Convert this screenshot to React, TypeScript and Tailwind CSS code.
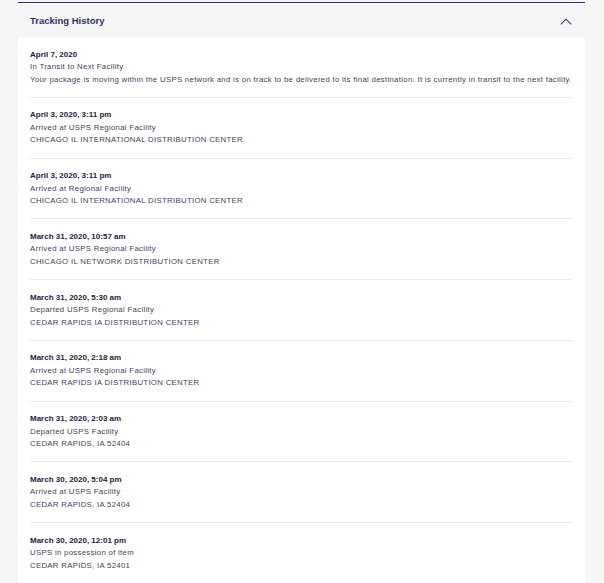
import React from "react";

const events = [
  {
    date: "April 7, 2020",
    status: "In Transit to Next Facility",
    detail:
      "Your package is moving within the USPS network and is on track to be delivered to its final destination. It is currently in transit to the next facility.",
  },
  { date: "April 3, 2020, 3:11 pm", status: "Arrived at USPS Regional Facility", detail: "CHICAGO IL INTERNATIONAL DISTRIBUTION CENTER" },
  { date: "April 3, 2020, 3:11 pm", status: "Arrived at Regional Facility", detail: "CHICAGO IL INTERNATIONAL DISTRIBUTION CENTER" },
  { date: "March 31, 2020, 10:57 am", status: "Arrived at USPS Regional Facility", detail: "CHICAGO IL NETWORK DISTRIBUTION CENTER" },
  { date: "March 31, 2020, 5:30 am", status: "Departed USPS Regional Facility", detail: "CEDAR RAPIDS IA DISTRIBUTION CENTER" },
  { date: "March 31, 2020, 2:18 am", status: "Arrived at USPS Regional Facility", detail: "CEDAR RAPIDS IA DISTRIBUTION CENTER" },
  { date: "March 31, 2020, 2:03 am", status: "Departed USPS Facility", detail: "CEDAR RAPIDS, IA 52404" },
  { date: "March 30, 2020, 5:04 pm", status: "Arrived at USPS Facility", detail: "CEDAR RAPIDS, IA 52404" },
  { date: "March 30, 2020, 12:01 pm", status: "USPS in possession of item", detail: "CEDAR RAPIDS, IA 52401" },
];

export default function App() {
  return (
    <div
      className="w-[604px] h-[583px] overflow-hidden bg-[#f6f6f6]"
      style={{ fontFamily: '"Liberation Sans", Arial, sans-serif' }}
    >
      <div className="ml-[18px] w-[567px] mt-[2px] border-t border-[#333366]">
        <div className="h-[34px] flex items-center justify-between pl-[12px] pr-[13px] pt-[2px] bg-[#f5f5f5]">
          <span className="text-[9.5px] font-bold text-[#333366] leading-none">Tracking History</span>
          <svg width="12" height="7" viewBox="0 0 12 7" fill="none">
            <path d="M0.8 6.4 L6 1.2 L11.2 6.4" stroke="#333366" strokeWidth="1.1" />
          </svg>
        </div>
        <div className="bg-white px-[12px]">
          {events.map((e, i) => (
            <div key={i} className="pt-[11.5px] pb-[10.75px] border-b border-[#ececec] leading-[12.5px]">
              <div className="text-[8px] font-bold text-[#23233f]">{e.date}</div>
              <div className="text-[7.8px] tracking-[0.3px] text-[#3f3f5e]">{e.status}</div>
              <div className="text-[7.8px] tracking-[0.3px] text-[#3f3f5e] whitespace-nowrap">{e.detail}</div>
            </div>
          ))}
        </div>
      </div>
    </div>
  );
}
